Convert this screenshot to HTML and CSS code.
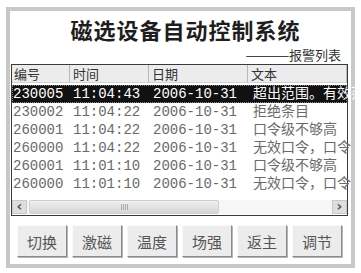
FILE: index.html
```html
<!DOCTYPE html>
<html lang="zh-CN">
<head>
  <meta charset="UTF-8">
  <title>磁选设备自动控制系统</title>
  <link rel="stylesheet" href="styles.css">
</head>
<body>
  <!-- Main window -->
  <div class="frame">
    <div class="title">磁选设备自动控制系统</div>
    <div class="subtitle"><span class="dash">——</span>报警列表</div>

    <!-- Alarm list -->
    <div class="list">
      <div class="row head">
        <div class="cell">编号</div>
        <div class="cell">时间</div>
        <div class="cell">日期</div>
        <div class="cell">文本</div>
      </div>
      <div class="rows">
        <div class="row selected">
          <div class="cell">230005</div>
          <div class="cell">11:04:43</div>
          <div class="cell">2006-10-31</div>
          <div class="cell">超出范围。有效范围</div>
        </div>
        <div class="row">
          <div class="cell">230002</div>
          <div class="cell">11:04:22</div>
          <div class="cell">2006-10-31</div>
          <div class="cell">拒绝条目</div>
        </div>
        <div class="row">
          <div class="cell">260001</div>
          <div class="cell">11:04:22</div>
          <div class="cell">2006-10-31</div>
          <div class="cell">口令级不够高</div>
        </div>
        <div class="row">
          <div class="cell">260000</div>
          <div class="cell">11:04:22</div>
          <div class="cell">2006-10-31</div>
          <div class="cell">无效口令，口令</div>
        </div>
        <div class="row">
          <div class="cell">260001</div>
          <div class="cell">11:01:10</div>
          <div class="cell">2006-10-31</div>
          <div class="cell">口令级不够高</div>
        </div>
        <div class="row">
          <div class="cell">260000</div>
          <div class="cell">11:01:10</div>
          <div class="cell">2006-10-31</div>
          <div class="cell">无效口令，口令</div>
        </div>
      </div>

      <!-- Horizontal scrollbar -->
      <div class="scrollbar">
        <div class="arrow">&lsaquo;</div>
        <div class="thumb"><span class="grip"></span></div>
        <div class="track"></div>
        <div class="arrow">&rsaquo;</div>
      </div>
    </div>

    <!-- Buttons -->
    <div class="buttons">
      <button>切换</button>
      <button>激磁</button>
      <button>温度</button>
      <button>场强</button>
      <button>返主</button>
      <button>调节</button>
    </div>
  </div>
</body>
</html>
```

FILE: styles.css
```css
/* Page */
body {
  margin: 0;
  padding: 7px 6px 5px 6px;
  background: #fff;
  font-family: "Noto Sans CJK SC", sans-serif;
}

/* Window frame */
.frame {
  width: 341px;
  height: 253px;
  border: 4px solid #c8c8c8;
  background: #fff;
  display: flex;
  flex-direction: column;
}

.title {
  height: 32px;
  padding: 3px 0 0 10px;
  text-align: center;
  font-size: 22px;
  font-weight: bold;
  letter-spacing: 1px;
  line-height: 30px;
  color: #1e1e1e;
}

.subtitle {
  height: 15px;
  padding: 1px 10px 2px 0;
  text-align: right;
  font-size: 13px;
  line-height: 15px;
  color: #333;
}

.dash {
  display: inline-block;
  font-family: "Liberation Sans", sans-serif;
  letter-spacing: -1px;
  transform: scaleX(1.7);
  transform-origin: right center;
  margin-right: 2px;
  color: #444;
}

/* List view */
.list {
  margin: 0 3px 0 1px;
  height: 150px;
  border: 1px solid #3a3a3a;
  display: flex;
  flex-direction: column;
  font-family: "Liberation Mono", "Noto Sans CJK SC", monospace;
  font-size: 14px;
}

.row {
  display: grid;
  grid-template-columns: 58px 79px 99px 1fr;
  height: 18px;
  line-height: 18px;
  color: #6a6a6a;
  white-space: nowrap;
}

.cell {
  padding-left: 3px;
}

.row .cell:first-child {
  padding-left: 1px;
}

.row .cell:nth-child(3) {
  padding-left: 4px;
}

.row .cell:nth-child(4) {
  padding-left: 5px;
  overflow-x: clip;
}

.row.head {
  height: 17px;
  line-height: 17px;
  background: #ececec;
  border-bottom: 1px solid #d0d0d0;
  color: #333;
  font-family: "Noto Sans CJK SC", sans-serif;
  font-size: 13px;
}

.row.head .cell {
  border-right: 1px solid #b8b8b8;
  padding-left: 3px;
}

.row.head .cell:first-child {
  padding-left: 2px;
}

.rows {
  flex: 1;
  padding-top: 2px;
}

.row.selected {
  background: #111;
  color: #fff;
  outline: 1px dotted #888;
  outline-offset: -1px;
}

/* Scrollbar */
.scrollbar {
  display: flex;
  height: 14px;
  margin-bottom: 1px;
  background: #f6f6f6;
}

.arrow {
  width: 15px;
  background: #dedede;
  border: 1px solid #c8c8c8;
  box-sizing: border-box;
  color: #555;
  font-family: "DejaVu Sans", sans-serif;
  font-size: 14px;
  font-weight: bold;
  line-height: 11px;
  text-align: center;
}

.thumb {
  width: 190px;
  margin-left: 2px;
  background: linear-gradient(#f0f0f0, #d6d6d6);
  border: 1px solid #cfcfcf;
  border-radius: 2px;
  box-sizing: border-box;
  display: flex;
  justify-content: center;
  align-items: center;
}

.grip {
  width: 7px;
  height: 6px;
  background: repeating-linear-gradient(90deg, #aaa 0 1px, transparent 1px 2px);
}

.track {
  flex: 1;
}

/* Bottom buttons */
.buttons {
  display: flex;
  gap: 5px;
  padding: 9px 0 0 7px;
}

button {
  width: 50px;
  height: 32px;
  padding: 0;
  background: #ececec;
  border: 1px solid;
  border-color: #fafafa #8a8a8a #8a8a8a #fafafa;
  box-shadow: 1px 1px 0 #b5b5b5;
  color: #555;
  font-family: "Noto Sans CJK SC", sans-serif;
  font-size: 15px;
}
```
